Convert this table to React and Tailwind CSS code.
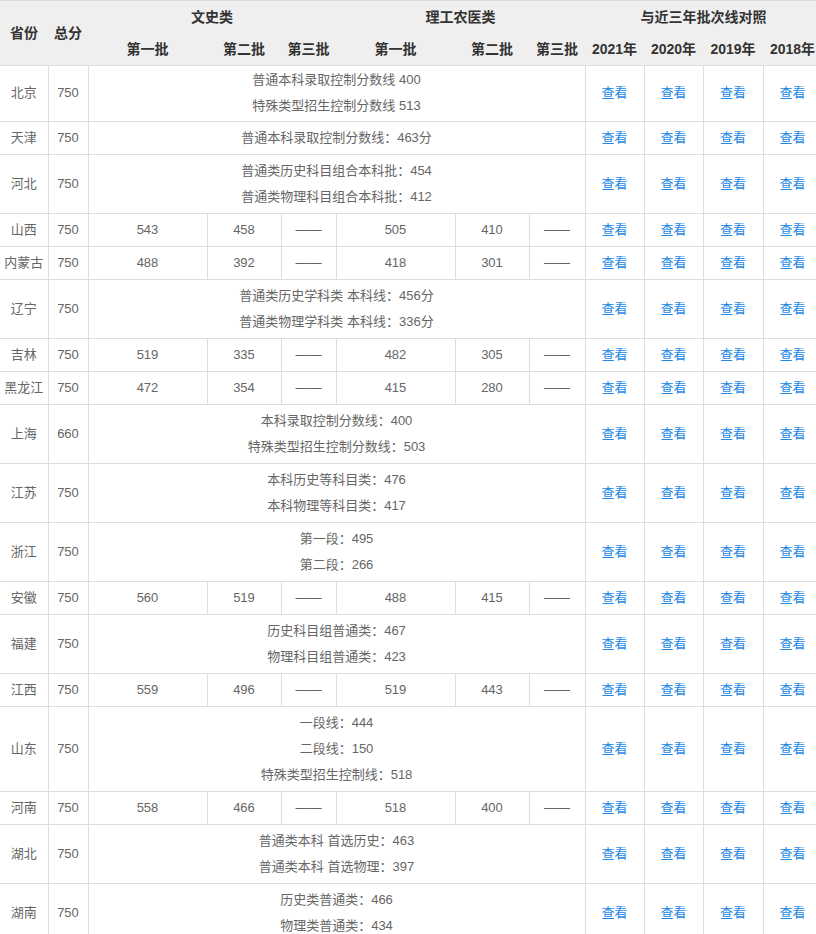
import React from "react";

const rows = [
  { p: "北京", t: "750", m: ["普通本科录取控制分数线 400", "特殊类型招生控制分数线 513"], bj: true },
  { p: "天津", t: "750", m: ["普通本科录取控制分数线：463分"] },
  { p: "河北", t: "750", m: ["普通类历史科目组合本科批：454", "普通类物理科目组合本科批：412"] },
  { p: "山西", t: "750", v: ["543", "458", "——", "505", "410", "——"] },
  { p: "内蒙古", t: "750", v: ["488", "392", "——", "418", "301", "——"] },
  { p: "辽宁", t: "750", m: ["普通类历史学科类 本科线：456分", "普通类物理学科类 本科线：336分"] },
  { p: "吉林", t: "750", v: ["519", "335", "——", "482", "305", "——"] },
  { p: "黑龙江", t: "750", v: ["472", "354", "——", "415", "280", "——"] },
  { p: "上海", t: "660", m: ["本科录取控制分数线：400", "特殊类型招生控制分数线：503"] },
  { p: "江苏", t: "750", m: ["本科历史等科目类：476", "本科物理等科目类：417"] },
  { p: "浙江", t: "750", m: ["第一段：495", "第二段：266"] },
  { p: "安徽", t: "750", v: ["560", "519", "——", "488", "415", "——"] },
  { p: "福建", t: "750", m: ["历史科目组普通类：467", "物理科目组普通类：423"] },
  { p: "江西", t: "750", v: ["559", "496", "——", "519", "443", "——"] },
  { p: "山东", t: "750", m: ["一段线：444", "二段线：150", "特殊类型招生控制线：518"] },
  { p: "河南", t: "750", v: ["558", "466", "——", "518", "400", "——"] },
  { p: "湖北", t: "750", m: ["普通类本科 首选历史：463", "普通类本科 首选物理：397"] },
  { p: "湖南", t: "750", m: ["历史类普通类：466", "物理类普通类：434"] },
];

const widths = [48, 40, 119, 74, 55, 119, 74, 56, 59, 59, 60, 59];

export default function App() {
  const td = "border-b border-r border-[#dddddd] text-center align-middle px-0";
  return (
    <div
      className="w-[816px] h-[934px] overflow-hidden bg-white"
      style={{ fontFamily: '"Liberation Sans", "Noto Sans CJK SC", sans-serif' }}
    >
      <table className="table-fixed border-collapse w-[822px] text-[13px] leading-[26px] text-[#666666]">
        <colgroup>
          {widths.map((w, i) => (
            <col key={i} style={{ width: w }} />
          ))}
        </colgroup>
        <thead>
          <tr className="bg-[#efefef] text-[#333333] text-[14px] font-bold border-t border-[#dddddd]">
            <th rowSpan={2} className="py-[3px] font-bold text-center">省份</th>
            <th rowSpan={2} className="py-[3px] font-bold text-center">总分</th>
            <th colSpan={3} className="py-[3px] font-bold text-center">文史类</th>
            <th colSpan={3} className="py-[3px] font-bold text-center">理工农医类</th>
            <th colSpan={4} className="py-[3px] font-bold text-center">与近三年批次线对照</th>
          </tr>
          <tr className="bg-[#efefef] text-[#333333] text-[14px] font-bold">
            <th className="py-[3px] font-bold text-center">第一批</th>
            <th className="py-[3px] font-bold text-center">第二批</th>
            <th className="py-[3px] font-bold text-center">第三批</th>
            <th className="py-[3px] font-bold text-center">第一批</th>
            <th className="py-[3px] font-bold text-center">第二批</th>
            <th className="py-[3px] font-bold text-center">第三批</th>
            <th className="py-[3px] font-bold text-center">2021年</th>
            <th className="py-[3px] font-bold text-center">2020年</th>
            <th className="py-[3px] font-bold text-center">2019年</th>
            <th className="py-[3px] font-bold text-center whitespace-nowrap">2018年</th>
          </tr>
        </thead>
        <tbody>
          {rows.map((r, i) => {
            const pad = r.bj ? "pt-[1px] pb-[2px]" : "py-[3px]";
            return (
              <tr key={i} className="border-t border-[#dddddd]">
                <td className={`${td} ${pad} whitespace-nowrap`}>{r.p}</td>
                <td className={`${td} ${pad}`}>{r.t}</td>
                {r.m ? (
                  <td colSpan={6} className={`${td} ${pad}`}>
                    {r.m.map((l, j) => (
                      <p key={j}>{l}</p>
                    ))}
                  </td>
                ) : (
                  r.v.map((x, j) => (
                    <td key={j} className={`${td} ${pad}`}>
                      {x}
                    </td>
                  ))
                )}
                {[0, 1, 2, 3].map((k) => (
                  <td key={"l" + k} className={`${td} ${pad}`}>
                    <a href="#" className="text-[#1e88e5]">查看</a>
                  </td>
                ))}
              </tr>
            );
          })}
        </tbody>
      </table>
    </div>
  );
}
